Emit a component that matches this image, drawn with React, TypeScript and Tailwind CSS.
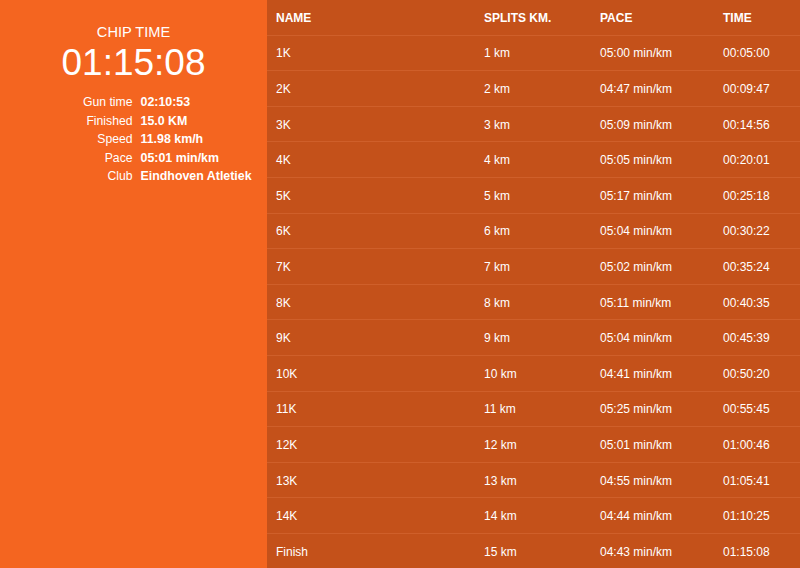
const stats: [string, string][] = [
  ["Gun time", "02:10:53"],
  ["Finished", "15.0 KM"],
  ["Speed", "11.98 km/h"],
  ["Pace", "05:01 min/km"],
  ["Club", "Eindhoven Atletiek"],
];

const splits: [string, string, string, string][] = [
  ["1K", "1 km", "05:00 min/km", "00:05:00"],
  ["2K", "2 km", "04:47 min/km", "00:09:47"],
  ["3K", "3 km", "05:09 min/km", "00:14:56"],
  ["4K", "4 km", "05:05 min/km", "00:20:01"],
  ["5K", "5 km", "05:17 min/km", "00:25:18"],
  ["6K", "6 km", "05:04 min/km", "00:30:22"],
  ["7K", "7 km", "05:02 min/km", "00:35:24"],
  ["8K", "8 km", "05:11 min/km", "00:40:35"],
  ["9K", "9 km", "05:04 min/km", "00:45:39"],
  ["10K", "10 km", "04:41 min/km", "00:50:20"],
  ["11K", "11 km", "05:25 min/km", "00:55:45"],
  ["12K", "12 km", "05:01 min/km", "01:00:46"],
  ["13K", "13 km", "04:55 min/km", "01:05:41"],
  ["14K", "14 km", "04:44 min/km", "01:10:25"],
  ["Finish", "15 km", "04:43 min/km", "01:15:08"],
];

export default function App() {
  return (
    <div className="flex h-[568px] w-[800px] overflow-hidden font-['Liberation_Sans',Arial,sans-serif] text-white">
      {/* summary */}
      <div className="w-[267px] shrink-0 bg-[#f46520] pt-[24px]">
        <div className="text-center text-[14.6px] leading-[16px]">CHIP TIME</div>
        <div className="mt-[2px] text-center text-[37px] leading-[42px]">01:15:08</div>
        <div className="mt-[9px]">
          {stats.map(([label, value]) => (
            <div key={label} className="grid grid-cols-2 text-[12.2px] leading-[18.5px]">
              <span className="pr-[1px] text-right">{label}</span>
              <span className="pl-[7px] text-[12.4px] font-bold whitespace-nowrap">{value}</span>
            </div>
          ))}
        </div>
      </div>

      {/* splits table */}
      <div className="flex-1 bg-[#c4511a]">
        <div className="grid h-[35.6px] grid-cols-[208px_116px_123px_1fr] items-center border-b border-[#cf5f2a] pt-[1px] pl-[9px] text-[12px] font-bold">
          <span>NAME</span>
          <span>SPLITS KM.</span>
          <span>PACE</span>
          <span>TIME</span>
        </div>
        {splits.map(([name, km, pace, time]) => (
          <div
            key={name}
            className="grid h-[35.6px] grid-cols-[208px_116px_123px_1fr] items-center border-b border-[#cf5f2a] pt-[1px] pl-[9px] text-[12px]"
          >
            <span>{name}</span>
            <span>{km}</span>
            <span>{pace}</span>
            <span>{time}</span>
          </div>
        ))}
      </div>
    </div>
  );
}
